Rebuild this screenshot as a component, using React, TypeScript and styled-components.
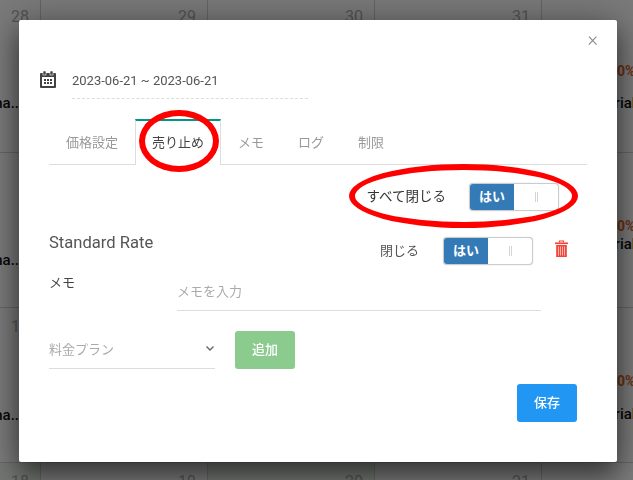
import React from 'react';
import styled, { createGlobalStyle } from 'styled-components';

const GlobalStyle = createGlobalStyle`
  html, body {
    margin: 0;
    padding: 0;
    height: 100%;
    overflow: hidden;
    background: #fff;
    font-family: Roboto, "Noto Sans CJK JP", sans-serif;
    font-size: 13px;
    color: #555;
  }
`;

// Calendar behind the dialog
const Page = styled.div`
  height: 480px;
  overflow: hidden;
`;

const Calendar = styled.div`
  display: grid;
  grid-template-columns: repeat(5, 167px);
  grid-auto-rows: 155px;
  width: 835px;
  margin: -2px 0 0 -126px;
`;

const Day = styled.div<{ $tint?: boolean }>`
  box-sizing: border-box;
  border-right: 1px solid #d4d4d4;
  border-bottom: 1px solid #d4d4d4;
  padding: 10px 11px 0 0;
  background: ${p => (p.$tint ? '#eef6ee' : 'transparent')};
  text-align: right;
  font-size: 16px;
  line-height: 18px;
  color: #b0b0b0;
`;

const Rate = styled.div`
  margin-top: 36px;
  padding-left: 67px;
  font-size: 14px;
  font-weight: 700;
  color: #e0662a;
  text-align: left;
`;

const RoomName = styled.div<{ $top: number; $side: 'left' | 'right' }>`
  margin-top: ${p => p.$top}px;
  font-size: 15px;
  font-weight: 500;
  color: #111;
  text-align: ${p => p.$side};
  padding-left: ${p => (p.$side === 'left' ? '64px' : '0')};
  padding-right: ${p => (p.$side === 'right' ? '10px' : '0')};
`;

const Overlay = styled.div`
  position: fixed;
  inset: 0;
  background: rgba(0, 0, 0, 0.52);
`;

const Dialog = styled.div`
  position: absolute;
  left: 19px;
  top: 20px;
  box-sizing: border-box;
  width: 598px;
  height: 442px;
  padding: 43px 30px 0;
  background: #fff;
  border-radius: 2px;
  box-shadow: 0 14px 24px rgba(0, 0, 0, 0.45), 0 0 36px rgba(0, 0, 0, 0.3);
`;

const CloseButton = styled.span`
  position: absolute;
  top: 8px;
  right: 19px;
  font-size: 20px;
  line-height: 22px;
  font-weight: 300;
  color: #8a8a8a;
`;

const DateRow = styled.div`
  display: flex;
  align-items: flex-start;
  margin-left: -9px;
  gap: 16px;
`;

const DateIcon = styled.svg`
  flex: none;
  width: 16px;
  height: 17px;
  margin-top: 8px;
`;

const DateField = styled.div`
  box-sizing: border-box;
  width: 236px;
  height: 36px;
  padding-top: 9px;
  line-height: 18px;
  border-bottom: 1px dashed #ddd;
  color: #555;
  white-space: nowrap;
`;

const Tabs = styled.div`
  display: flex;
  height: 46px;
  box-sizing: border-box;
  margin-top: 20px;
  border-bottom: 1px solid #ddd;
`;

const Tab = styled.div<{ $active?: boolean }>`
  box-sizing: border-box;
  height: 46px;
  padding: 13px ${p => (p.$active ? '16px' : '17px')} 0;
  line-height: 18px;
  white-space: nowrap;
  color: ${p => (p.$active ? '#444' : '#999')};
  background: ${p => (p.$active ? '#fff' : 'transparent')};
  border-top: 2px solid ${p => (p.$active ? '#009688' : 'transparent')};
  ${p => p.$active && `
    border-left: 1px solid #ddd;
    border-right: 1px solid #ddd;
  `}
`;

const CloseAllRow = styled.div`
  display: flex;
  justify-content: flex-end;
  align-items: center;
  gap: 23px;
  margin-top: 18px;
  padding-right: 28px;
  color: #333;
`;

const CloseAllLabel = styled.span`
  font-size: 13.5px;
  padding-bottom: 4px;
`;

const Toggle = styled.div`
  display: flex;
  box-sizing: border-box;
  width: 90px;
  height: 28px;
  border: 1px solid #ccc;
  border-radius: 4px;
  box-shadow: 0 0 1px #bbb;
  overflow: hidden;
  background: #fff;
`;

const ToggleOn = styled.span`
  width: 44px;
  background: #337ab7;
  color: #fff;
  font-weight: 700;
  line-height: 26px;
  text-align: center;
`;

const ToggleHandle = styled.span`
  flex: 1;
  display: flex;
  justify-content: center;
  align-items: center;
  gap: 1px;

  &::before,
  &::after {
    content: '';
    width: 1px;
    height: 10px;
    background: #d4d4d4;
  }
`;

const RateHead = styled.div`
  display: flex;
  justify-content: space-between;
  margin-top: 26px;
  padding-right: 19px;
`;

const RateTitle = styled.div`
  font-size: 16.6px;
  line-height: 18px;
  margin-top: -3px;
  color: #555;
`;

const RateControls = styled.div`
  display: flex;
  align-items: center;
`;

const ControlLabel = styled.span`
  margin-right: 24px;
  padding-bottom: 3px;
  color: #555;
`;

const TrashIcon = styled.svg`
  flex: none;
  width: 13px;
  height: 17px;
  margin: -5px 0 0 22px;
`;

const MemoRow = styled.div`
  display: flex;
  margin-top: 10px;
`;

const MemoLabel = styled.div`
  width: 128px;
  margin-top: -1px;
  line-height: 18px;
  color: #444;
`;

const MemoInput = styled.div`
  box-sizing: border-box;
  width: 364px;
  height: 36px;
  padding-top: 8px;
  line-height: 18px;
  border-bottom: 1px solid #ddd;
  color: #aaa;
`;

const PlanRow = styled.div`
  display: flex;
  gap: 20px;
  margin-top: 20px;
`;

const PlanSelect = styled.div`
  display: flex;
  justify-content: space-between;
  align-items: center;
  box-sizing: border-box;
  width: 166px;
  height: 38px;
  padding-bottom: 2px;
  border-bottom: 1px solid #ddd;
  color: #aaa;
`;

const Chevron = styled.svg`
  width: 8px;
  height: 5px;
  margin-right: 1px;
  fill: none;
  stroke: #666;
  stroke-width: 1.4;
`;

const Button = styled.div<{ $color: string }>`
  width: 60px;
  height: 38px;
  border-radius: 3px;
  background: ${p => p.$color};
  color: #fff;
  font-size: 13px;
  font-weight: 500;
  line-height: 38px;
  text-align: center;
`;

const Footer = styled.div`
  display: flex;
  justify-content: flex-end;
  margin-top: 15px;
  padding-right: 10px;
`;

// Red hand-drawn marks on top of the screenshot
const Mark = styled.div<{ $l: number; $t: number; $w: number; $h: number }>`
  position: absolute;
  left: ${p => p.$l}px;
  top: ${p => p.$t}px;
  width: ${p => p.$w}px;
  height: ${p => p.$h}px;
  box-sizing: border-box;
  border: 6px solid #f00;
  border-radius: 50%;
`;

type Cell = { n?: string; rate?: string; name?: string; top?: number; side?: 'left' | 'right'; tint?: boolean };

const days: Cell[] = [
  { n: '28', name: 'ma..', top: 68, side: 'right' }, { n: '29' }, { n: '30' }, { n: '31' },
  { rate: '50%', name: 'Trial', top: 14, side: 'left' },
  { n: '4', name: 'ma..', top: 70, side: 'right' }, { n: '5' }, { n: '6' }, { n: '7' },
  { rate: '50%', name: 'Trial', top: 0, side: 'left' },
  { n: '11', name: 'ma..', top: 70, side: 'right' }, { n: '12' }, { n: '13' }, { n: '14' },
  { rate: '50%', name: 'Trial', top: 15, side: 'left' },
  { n: '18', tint: true }, { n: '19' }, { n: '20', tint: true }, { n: '21' }, {},
];

const Switch = () => (
  <Toggle>
    <ToggleOn>はい</ToggleOn>
    <ToggleHandle />
  </Toggle>
);

const App: React.FC = () => {
  return (
    <>
      <GlobalStyle />
      <Page>
        <Calendar>
          {days.map((d, i) => (
            <Day key={i} $tint={d.tint}>
              {d.n ?? '\u00a0'}
              {d.rate && <Rate>{d.rate}</Rate>}
              {d.name && <RoomName $top={d.top ?? 0} $side={d.side ?? 'left'}>{d.name}</RoomName>}
            </Day>
          ))}
        </Calendar>
      </Page>
      <Overlay />
      <Dialog>
        <CloseButton>×</CloseButton>
        <DateRow>
          <DateIcon viewBox="0 0 16 17">
            <rect x="0" y="2" width="16" height="15" rx="1" fill="#424242" />
            <rect x="3" y="0" width="3" height="4" fill="#424242" stroke="#fff" strokeWidth="0.6" />
            <rect x="10" y="0" width="3" height="4" fill="#424242" stroke="#fff" strokeWidth="0.6" />
            <rect x="2" y="6" width="12" height="9" fill="#fff" />
            <path d="M4 8h2v2H4zM7 8h2v2H7zM10 8h2v2h-2zM4 11h2v2H4zM7 11h2v2H7zM10 11h2v2h-2z" fill="#424242" />
          </DateIcon>
          <DateField>2023-06-21 ~ 2023-06-21</DateField>
        </DateRow>
        <Tabs>
          <Tab>価格設定</Tab>
          <Tab $active>売り止め</Tab>
          <Tab>メモ</Tab>
          <Tab>ログ</Tab>
          <Tab>制限</Tab>
        </Tabs>
        <CloseAllRow>
          <CloseAllLabel>すべて閉じる</CloseAllLabel>
          <Switch />
        </CloseAllRow>
        <RateHead>
          <RateTitle>Standard Rate</RateTitle>
          <RateControls>
            <ControlLabel>閉じる</ControlLabel>
            <Switch />
            <TrashIcon viewBox="0 0 13 17">
              <path d="M4.5 2.5V1h4v1.5" fill="none" stroke="#f44336" strokeWidth="1.2" />
              <rect x="0" y="2.5" width="13" height="1.6" fill="#f44336" />
              <path d="M1.2 5h10.6v12H1.2z" fill="#f44336" />
              <path d="M3.5 6.5v9M5.5 6.5v9M7.5 6.5v9M9.5 6.5v9" stroke="#fbc2bd" strokeWidth="0.9" />
            </TrashIcon>
          </RateControls>
        </RateHead>
        <MemoRow>
          <MemoLabel>メモ</MemoLabel>
          <MemoInput>メモを入力</MemoInput>
        </MemoRow>
        <PlanRow>
          <PlanSelect>
            <span>料金プラン</span>
            <Chevron viewBox="0 0 8 5"><path d="M0.5 0.5 L4 4 L7.5 0.5" /></Chevron>
          </PlanSelect>
          <Button $color="#8bcb8e">追加</Button>
        </PlanRow>
        <Footer>
          <Button $color="#2196f3">保存</Button>
        </Footer>
      </Dialog>
      <Mark $l={139} $t={110} $w={80} $h={62} />
      <Mark $l={349} $t={164} $w={229} $h={64} />
    </>
  );
};

export default App;
